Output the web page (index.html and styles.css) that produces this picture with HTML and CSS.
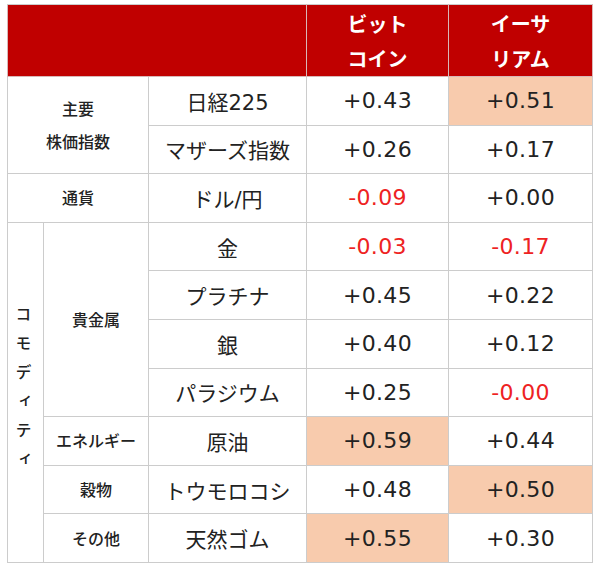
FILE: index.html
```html
<!DOCTYPE html>
<html lang="ja">
<head>
<meta charset="utf-8">
<link rel="stylesheet" href="styles.css">
</head>
<body>
<table class="corr">
  <colgroup>
    <col class="c1"><col class="c2"><col class="c3"><col class="c4"><col class="c5">
  </colgroup>
  <thead>
    <tr class="head">
      <th colspan="3"></th>
      <th>ビット<br>コイン</th>
      <th>イーサ<br>リアム</th>
    </tr>
  </thead>
  <tbody>
    <tr>
      <td class="grp" colspan="2" rowspan="2">主要<br>株価指数</td>
      <td class="name">日経225</td>
      <td class="num">+0.43</td>
      <td class="num hi">+0.51</td>
    </tr>
    <tr>
      <td class="name">マザーズ指数</td>
      <td class="num">+0.26</td>
      <td class="num">+0.17</td>
    </tr>
    <tr>
      <td class="grp" colspan="2">通貨</td>
      <td class="name">ドル/円</td>
      <td class="num neg">-0.09</td>
      <td class="num">+0.00</td>
    </tr>
    <tr>
      <td class="vert" rowspan="7"><span class="vtext">コモディティ</span></td>
      <td class="grp" rowspan="4">貴金属</td>
      <td class="name">金</td>
      <td class="num neg">-0.03</td>
      <td class="num neg">-0.17</td>
    </tr>
    <tr>
      <td class="name">プラチナ</td>
      <td class="num">+0.45</td>
      <td class="num">+0.22</td>
    </tr>
    <tr>
      <td class="name">銀</td>
      <td class="num">+0.40</td>
      <td class="num">+0.12</td>
    </tr>
    <tr>
      <td class="name">パラジウム</td>
      <td class="num">+0.25</td>
      <td class="num neg">-0.00</td>
    </tr>
    <tr>
      <td class="grp">エネルギー</td>
      <td class="name">原油</td>
      <td class="num hi">+0.59</td>
      <td class="num">+0.44</td>
    </tr>
    <tr>
      <td class="grp">穀物</td>
      <td class="name">トウモロコシ</td>
      <td class="num">+0.48</td>
      <td class="num hi">+0.50</td>
    </tr>
    <tr>
      <td class="grp">その他</td>
      <td class="name">天然ゴム</td>
      <td class="num hi">+0.55</td>
      <td class="num">+0.30</td>
    </tr>
  </tbody>
</table>
</body>
</html>
```

FILE: styles.css
```css
html, body {
  margin: 0;
  padding: 0;
  background: #ffffff;
}
body {
  padding: 4px 0 0 7px;
  font-family: "DejaVu Sans", "Noto Sans CJK JP", sans-serif;
  color: #222222;
}
.corr {
  border-collapse: collapse;
  table-layout: fixed;
  width: 585px;
}
.c1 { width: 36px; }
.c2 { width: 105px; }
.c3 { width: 158px; }
.c4 { width: 142px; }
.c5 { width: 144px; }
.corr th, .corr td {
  border: 1px solid #cccccc;
  padding: 0;
  text-align: center;
  vertical-align: middle;
}
.head th {
  background: #c00000;
  color: #ffffff;
  height: 71px;
  font-family: "Noto Sans CJK JP", sans-serif;
  font-weight: bold;
  font-size: 20px;
  line-height: 35px;
  border-color: #d8b8b8;
  border-top-color: #cccccc;
}
.corr tbody td {
  height: 47.6px;
}
.grp {
  font-family: "Noto Sans CJK JP", sans-serif;
  font-size: 16px;
  font-weight: 500;
  line-height: 33px;
}
.name {
  font-family: "DejaVu Sans", "Noto Sans CJK JP", sans-serif;
  font-size: 21px;
}
.num {
  font-size: 22px;
  letter-spacing: 0.3px;
}
.neg { color: #ee2222; }
.hi { background: #f8cbad; }
.vert {
  vertical-align: middle;
}
.vtext {
  display: inline-block;
  writing-mode: vertical-rl;
  text-orientation: upright;
  font-family: "Noto Sans CJK JP", sans-serif;
  font-size: 16px;
  font-weight: 500;
  letter-spacing: 13px;
  margin-left: -4px;
  margin-top: 6px;
}
```
